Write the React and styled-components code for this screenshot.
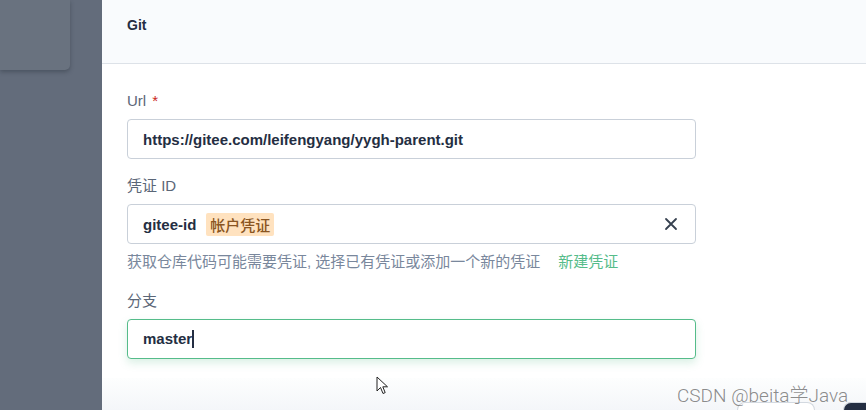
import React from "react";
import styled, { createGlobalStyle } from "styled-components";

const GlobalStyle = createGlobalStyle`
  html, body {
    margin: 0;
    padding: 0;
    height: 100%;
    overflow: hidden;
  }
  body {
    font-family: "Liberation Sans", "Noto Sans CJK SC", "Noto Sans", sans-serif;
    font-size: 14px;
    color: #242e42;
  }
  * {
    box-sizing: border-box;
  }
`;

const Screen = styled.div`
  position: relative;
  display: flex;
  width: 866px;
  height: 410px;
  background: #636c7b;
  overflow: hidden;
`;

const Backdrop = styled.div`
  width: 102px;
  flex-shrink: 0;
`;

const BackCard = styled.div`
  width: 70px;
  height: 70px;
  background: #69727f;
  border-bottom-right-radius: 5px;
  box-shadow: 0 2px 4px rgba(30, 36, 46, 0.35);
`;

const Panel = styled.div`
  flex: 1;
  display: flex;
  flex-direction: column;
  background: #ffffff;
`;

const Header = styled.div`
  height: 64px;
  flex-shrink: 0;
  padding: 15px 25px 0;
  background: #f9fbfd;
  border-bottom: 1px solid #dde2e8;
`;

const Title = styled.h3`
  margin: 0;
  line-height: 20px;
  font-size: 14px;
  font-weight: 700;
  color: #242e42;
`;

const Body = styled.div`
  flex: 1;
  padding: 27px 25px 0;
`;

const Group = styled.div`
  margin-bottom: 17px;
`;

const Label = styled.div`
  height: 20px;
  line-height: 20px;
  margin-bottom: 8px;
  color: #5a6677;
  font-size: 15px;
`;

const Required = styled.span`
  color: #ca2621;
  margin-left: 6px;
`;

const Field = styled.div`
  width: 569px;
  height: 40px;
  display: flex;
  align-items: center;
  gap: 8px;
  padding: 0 15px;
  border: 1px solid ${(p) => (p.focused ? "#55bc8a" : "#c9d0d9")};
  border-radius: 4px;
  background: #ffffff;
  box-shadow: ${(p) => (p.focused ? "0 4px 8px 0 rgba(85, 188, 138, 0.22)" : "none")};
`;

const Value = styled.span`
  font-weight: 700;
  font-size: 15px;
  color: #242e42;
`;

const Caret = styled.span`
  display: inline-block;
  width: 1.5px;
  height: 18px;
  background: #242e42;
  vertical-align: -4px;
`;

const Tag = styled.span`
  margin-left: 2px;
  padding: 1px 4px;
  border-radius: 2px;
  background: #ffe2bf;
  color: #8a5521;
  font-size: 15px;
  font-weight: 500;
`;

const Clear = styled.button`
  margin-left: auto;
  margin-right: 2px;
  display: flex;
  align-items: center;
  justify-content: center;
  padding: 0;
  border: none;
  background: none;
  color: #36404f;
  cursor: pointer;
`;

const Help = styled.div`
  margin-top: 8px;
  height: 22px;
  line-height: 20px;
  color: #79879c;
  font-size: 15px;
`;

const HelpLink = styled.a`
  margin-left: 18px;
  color: #55bc8a;
  text-decoration: none;
`;

const Footer = styled.div`
  height: 32px;
  flex-shrink: 0;
  display: flex;
  justify-content: flex-end;
  align-items: flex-end;
  gap: 28px;
  background: linear-gradient(#fdfefe, #f4f6f9);
`;

const FooterButton = styled.div`
  width: ${(p) => (p.primary ? "30px" : "78px")};
  height: 8px;
  margin-right: ${(p) => (p.primary ? "-7px" : "0")};
  border-radius: 14px 14px 0 0;
  border: 1px solid #d3d9e0;
  border-bottom: none;
  background: ${(p) => (p.primary ? "#242e42" : "#ffffff")};
`;

const Watermark = styled.div`
  position: absolute;
  left: 677px;
  top: 380px;
  font-family: Roboto, "Noto Sans CJK SC", sans-serif;
  font-size: 19px;
  font-weight: 300;
  color: rgba(110, 110, 110, 0.8);
  pointer-events: none;
`;

const Pointer = styled.svg`
  position: absolute;
  left: 376px;
  top: 376px;
`;

export default function App() {
  return (
    <>
      <GlobalStyle />
      <Screen>
        <Backdrop>
          <BackCard />
        </Backdrop>
        <Panel>
          <Header>
            <Title>Git</Title>
          </Header>
          <Body>
            <Group>
              <Label>
                Url<Required>*</Required>
              </Label>
              <Field>
                <Value>https://gitee.com/leifengyang/yygh-parent.git</Value>
              </Field>
            </Group>
            <Group>
              <Label>凭证 ID</Label>
              <Field>
                <Value>gitee-id</Value>
                <Tag>帐户凭证</Tag>
                <Clear>
                  <svg width="14" height="14" viewBox="0 0 14 14">
                    <path d="M2 2 L12 12 M12 2 L2 12" stroke="currentColor" strokeWidth="1.8" strokeLinecap="round" />
                  </svg>
                </Clear>
              </Field>
              <Help>
                获取仓库代码可能需要凭证, 选择已有凭证或添加一个新的凭证
                <HelpLink href="#">新建凭证</HelpLink>
              </Help>
            </Group>
            <Group>
              <Label>分支</Label>
              <Field focused>
                <Value>
                  master
                  <Caret />
                </Value>
              </Field>
            </Group>
          </Body>
          <Footer>
            <FooterButton />
            <FooterButton primary />
          </Footer>
        </Panel>
        <Pointer width="14" height="20" viewBox="0 0 14 20">
          <path d="M1 1 L1 15 L4.5 11.5 L7 17.5 L9.2 16.6 L6.8 10.8 L11.5 10.8 Z" fill="#ffffff" stroke="#222" strokeWidth="1" strokeLinejoin="round" />
        </Pointer>
        <Watermark>CSDN @beita学Java</Watermark>
      </Screen>
    </>
  );
}
